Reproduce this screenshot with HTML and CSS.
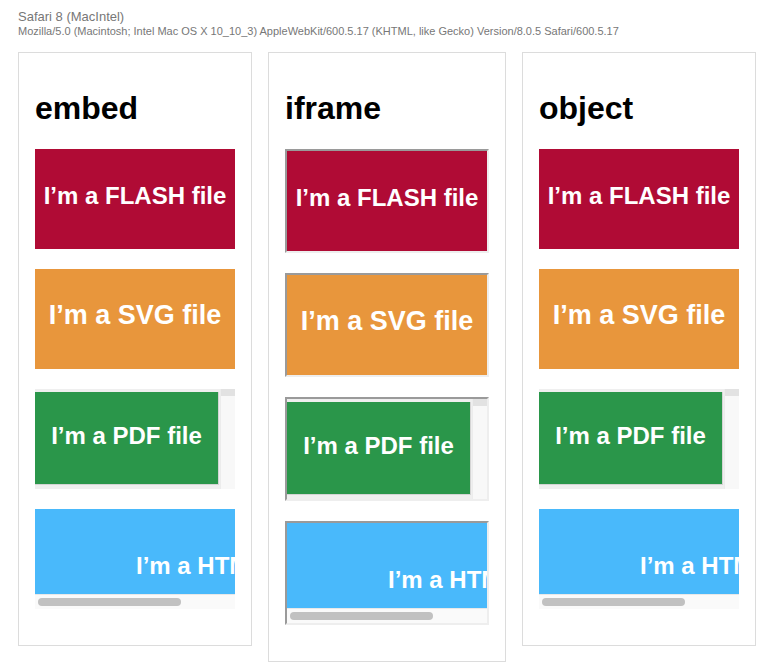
FILE: index.html
```html
<!DOCTYPE html>
<html>
<head>
<meta charset="utf-8">
<link rel="stylesheet" href="styles.css">
</head>
<body>
<header class="ua">
  <div class="browser">Safari 8 (MacIntel)</div>
  <div class="agent">Mozilla/5.0 (Macintosh; Intel Mac OS X 10_10_3) AppleWebKit/600.5.17 (KHTML, like Gecko) Version/8.0.5 Safari/600.5.17</div>
</header>
<main class="columns">
  <section class="panel">
    <h1>embed</h1>
    <div class="item"><div class="doc flash"><span class="label">I’m a FLASH file</span></div></div>
    <div class="item"><div class="doc svgdoc"><span class="label">I’m a SVG file</span></div></div>
    <div class="item"><div class="doc pdf"><div class="pdf-area"><div class="page"><span class="label">I’m a PDF file</span></div></div><div class="vscroll"><div class="vcap"></div></div></div></div>
    <div class="item"><div class="doc html"><div class="html-area"><span class="label">I’m a HTML file</span></div><div class="hscroll"><div class="thumb"></div></div></div></div>
  </section>
  <section class="panel">
    <h1>iframe</h1>
    <div class="item framed"><div class="doc flash"><span class="label">I’m a FLASH file</span></div></div>
    <div class="item framed"><div class="doc svgdoc"><span class="label">I’m a SVG file</span></div></div>
    <div class="item framed"><div class="doc pdf"><div class="pdf-area"><div class="page"><span class="label">I’m a PDF file</span></div></div><div class="vscroll"><div class="vcap"></div></div></div></div>
    <div class="item framed"><div class="doc html"><div class="html-area"><span class="label">I’m a HTML file</span></div><div class="hscroll"><div class="thumb"></div></div></div></div>
  </section>
  <section class="panel">
    <h1>object</h1>
    <div class="item"><div class="doc flash"><span class="label">I’m a FLASH file</span></div></div>
    <div class="item"><div class="doc svgdoc"><span class="label">I’m a SVG file</span></div></div>
    <div class="item"><div class="doc pdf"><div class="pdf-area"><div class="page"><span class="label">I’m a PDF file</span></div></div><div class="vscroll"><div class="vcap"></div></div></div></div>
    <div class="item"><div class="doc html"><div class="html-area"><span class="label">I’m a HTML file</span></div><div class="hscroll"><div class="thumb"></div></div></div></div>
  </section>
</main>
</body>
</html>
```
FILE: styles.css
```css
html, body {
  margin: 0;
  padding: 0;
  background: #fff;
}
body {
  font-family: "Liberation Sans", Arial, sans-serif;
  padding: 9px 18px 0 18px;
}
.ua .browser {
  font-size: 13px;
  line-height: 15px;
  color: #777;
}
.ua .agent {
  font-size: 11px;
  line-height: 13px;
  margin-top: 1px;
  color: #777;
}
.columns {
  display: flex;
  align-items: flex-start;
  gap: 16px;
  margin-top: 14px;
}
.panel {
  border: 1px solid #dcdcdc;
  padding: 16px;
}
.panel h1 {
  font-size: 32px;
  font-weight: bold;
  margin: 21.44px 0;
  color: #000;
  line-height: normal;
}
.item {
  margin-bottom: 20px;
  width: 200px;
}
.item.framed {
  border-style: solid;
  border-width: 2px;
  border-color: #9a9a9a #eeeeee #eeeeee #9a9a9a;
}
.doc {
  width: 200px;
  height: 100px;
  overflow: hidden;
  color: #fff;
  font-weight: bold;
}
.label {
  white-space: nowrap;
  line-height: normal;
}
.flash {
  background: #b00b35;
  text-align: center;
  font-size: 24px;
  padding-top: 33px;
  box-sizing: border-box;
}
.svgdoc {
  background: #e8963c;
  text-align: center;
  font-size: 27px;
  padding-top: 31px;
  box-sizing: border-box;
}
.pdf {
  display: flex;
}
.pdf-area {
  width: 185px;
  background: #efefef;
  padding-top: 3px;
  box-sizing: border-box;
}
.page {
  width: 184px;
  height: 93px;
  box-sizing: border-box;
  background: #2a964a;
  border-right: 1px solid #d4d4d4;
  border-bottom: 1px solid #d4d4d4;
  text-align: center;
  font-size: 24px;
  padding-top: 30px;
}
.vscroll {
  width: 15px;
  background: #f8f8f8;
  border-left: 1px solid #ececec;
  box-sizing: border-box;
}
.vcap {
  height: 7px;
  background: #e2e2e2;
}
.html {
  display: flex;
  flex-direction: column;
}
.html-area {
  height: 85px;
  background: #49b9fb;
  font-size: 24px;
  padding: 43px 0 0 101px;
  box-sizing: border-box;
  overflow: hidden;
}
.hscroll {
  height: 15px;
  background: #fafafa;
  border-top: 1px solid #e8e8e8;
  box-sizing: border-box;
  padding: 3px 0 0 3px;
}
.thumb {
  width: 143px;
  height: 8px;
  border-radius: 4px;
  background: #c1c1c1;
}
```
